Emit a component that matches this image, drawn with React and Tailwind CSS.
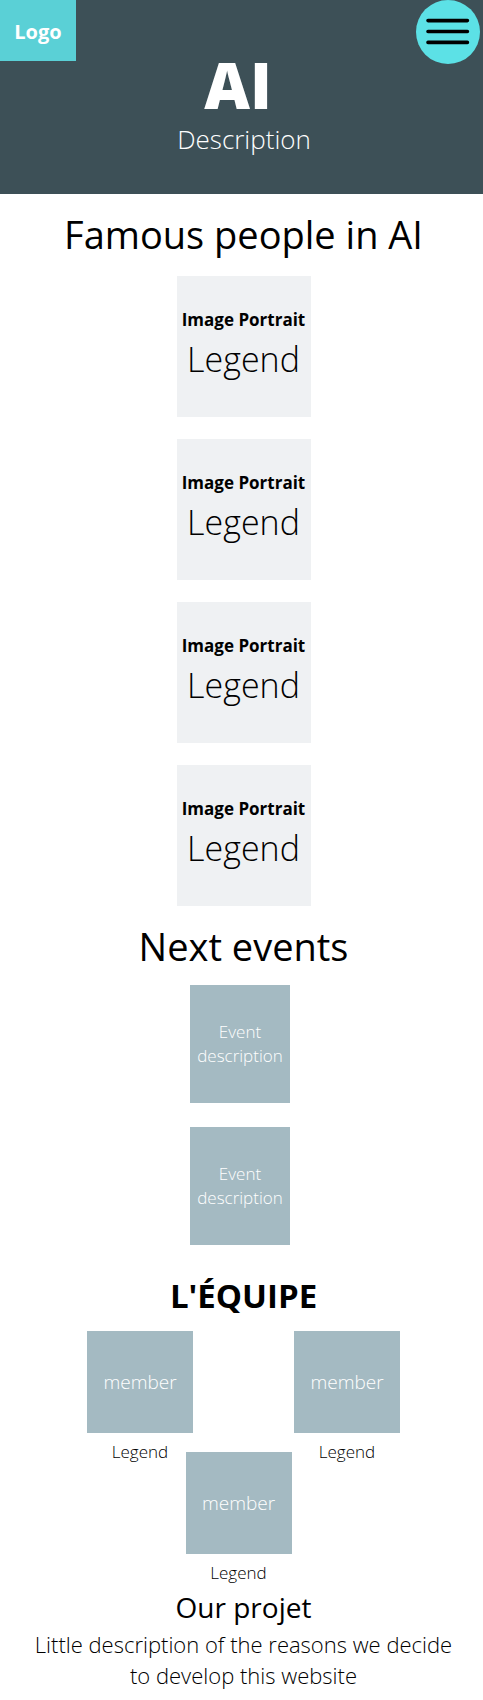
const portraits = [1, 2, 3, 4];
const events = [1, 2];

function Header() {
  return (
    <header className="flex h-[194px] items-start justify-between bg-[#3d5057] pr-[3px] text-white">
      <a
        href="#top"
        className="flex h-[61px] w-[76px] items-center justify-center bg-[#5ad0d6] pt-[2px] text-[20px] font-bold"
      >
        Logo
      </a>
      <div className="flex-1 pt-[49px] pr-1 text-center">
        <h1 className="pr-3 text-[63px] leading-[72px] font-extrabold">AI</h1>
        <p className="text-[26px] leading-9 font-light">Description</p>
      </div>
      <button
        type="button"
        aria-label="Menu"
        className="flex size-16 items-center justify-center rounded-full bg-[#5ce1e6]"
      >
        <svg viewBox="0 0 64 64" className="size-16" aria-hidden="true">
          <path
            d="M12 20.6H51.4M12 31.5H51.4M12 42.4H51.4"
            stroke="#000"
            strokeWidth="3.6"
            strokeLinecap="round"
          />
        </svg>
      </button>
    </header>
  );
}

function SectionTitle({ children }) {
  return <h2 className="text-center text-[38px] leading-[52px]">{children}</h2>;
}

function PortraitCard() {
  return (
    <li className="flex h-[141px] w-[134px] flex-col items-center bg-[#eff1f3] pt-8">
      <p className="text-[17px] leading-6 font-bold">Image Portrait</p>
      <p className="text-[34px] leading-[54px] font-light">Legend</p>
    </li>
  );
}

function EventCard() {
  return (
    <li className="flex h-[118px] w-[100px] items-center justify-center bg-[#a4bac2] text-center text-[17px] leading-6 font-light text-white">
      Event
      <br />
      description
    </li>
  );
}

function Member() {
  return (
    <figure className="w-[106px] text-center font-light">
      <div className="flex h-[102px] items-center justify-center bg-[#a4bac2] text-[19px] text-white">
        member
      </div>
      <figcaption className="pt-[7px] text-[17px] leading-6">Legend</figcaption>
    </figure>
  );
}

export default function App() {
  return (
    <div id="top" className="min-h-screen bg-white font-['Open_Sans',sans-serif] text-black">
      <Header />
      <main className="pl-1">
        <section className="pt-[14px]">
          <SectionTitle>Famous people in AI</SectionTitle>
          <ul className="flex flex-col items-center gap-[22px] pt-4">
            {portraits.map((id) => (
              <PortraitCard key={id} />
            ))}
          </ul>
        </section>

        <section className="pt-[14px]">
          <SectionTitle>Next events</SectionTitle>
          <ul className="flex flex-col items-center gap-6 pt-[13px] pr-[7px]">
            {events.map((id) => (
              <EventCard key={id} />
            ))}
          </ul>
        </section>

        <section className="pt-7">
          <h2 className="text-center text-[33px] leading-[46px] font-bold">L'ÉQUIPE</h2>
          <div className="mx-auto flex w-[313px] justify-between pt-3">
            <Member />
            <Member />
          </div>
          <div className="-mt-3 flex justify-center pr-[10px]">
            <Member />
          </div>
        </section>

        <section className="text-center">
          <h2 className="pt-[2px] pb-[2px] text-[28px] leading-10">Our projet</h2>
          <p className="mx-auto max-w-[440px] text-[22px] leading-[31px] font-light">
            Little description of the reasons we decide to develop this website
          </p>
        </section>
      </main>
    </div>
  );
}
